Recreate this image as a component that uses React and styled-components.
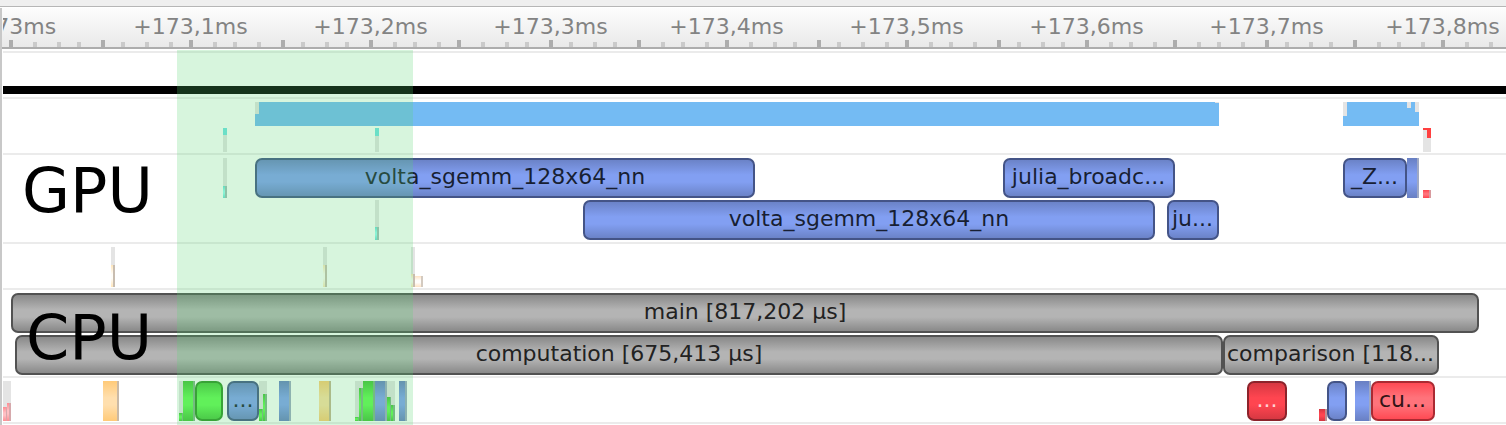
import React from "react";
import styled, { createGlobalStyle } from "styled-components";

const GlobalStyle = createGlobalStyle`
  html, body { margin: 0; background: #fff; overflow: hidden; }
`;

/* Each tone lists edge colour, centre colour, border colour and text colour. */
const tones = {
  blue: ["#687fc2", "#829ff2", "#445487", "#181f33"],
  gray: ["#838383", "#b4b4b4", "#525252", "#222222"],
  green: ["#45c13a", "#64f954", "#2f9426", "#123310"],
  red: ["#d13640", "#ff4550", "#8c232b", "#ffd0d3"],
  coral: ["#ff444e", "#ff737b", "#ab2a32", "#331416"],
  orange: ["#ffca78", "#ffdfae", "#c9b9a6", "#333333"],
  gold: ["#ffca74", "#ffdfa4", "#c5b391", "#333333"],
  cyan: ["#6addd5", "#9bfbf3", "#a0bcb8", "#333333"],
  cream: ["#ffe6bb", "#fffdf8", "#c8bdb0", "#333333"],
  peach: ["#ffe3c4", "#fffdfb", "#d3cac0", "#333333"],
  pink: ["#ff8c93", "#ffc0c4", "#d6a9ac", "#333333"],
};

const fill = (tone) =>
  `linear-gradient(to bottom, ${tones[tone][0]} 0%, ${tones[tone][1]} 42%, ${tones[tone][1]} 60%, ${tones[tone][0]} 100%)`;

const Window = styled.div`
  position: relative;
  width: 1506px;
  height: 425px;
  overflow: hidden;
  background: #fff;
  font: 22px/1 "DejaVu Sans", sans-serif;
`;

const TopStrip = styled.div`
  height: 6px;
  background: #efefef;
  border-bottom: 1px solid #b6b6b6;
`;

const Trace = styled.main`
  height: 417px;
  margin-top: 1px;
  box-sizing: border-box;
  border-left: 2px solid #c8c8c8;
  padding-left: 1px;
  overflow: hidden;
`;

const Ruler = styled.header`
  height: 39px;
  margin-left: -1px;
  padding-left: 1px;
  display: flex;
  flex-direction: column;
  justify-content: space-between;
  background: linear-gradient(#fdfdfd, #e9e9e9);
  border-bottom: 2px solid #adadad;
`;

const Labels = styled.div`
  display: flex;
  height: 32px;
  padding-left: 6.5px;
  overflow: hidden;
`;

const Label = styled.span`
  width: 0;
  margin-right: ${(p) => p.$step}px;
  display: flex;
  justify-content: center;
  white-space: nowrap;
  line-height: 38px;
  color: #838383;
`;

const Ticks = styled.div`
  display: flex;
  align-items: flex-end;
  height: 7px;
  padding-left: 6px;
  overflow: hidden;
`;

const Tick = styled.i`
  flex: none;
  width: 4px;
  height: ${(p) => (p.$major ? 7 : 5)}px;
  margin-right: ${(p) => p.$step - 4}px;
  background: ${(p) => (p.$major ? "#adadad" : "#cacaca")};
`;

const Rows = styled.div`
  padding-top: 2px;
`;

const Row = styled.section`
  height: ${(p) => p.$height}px;
  box-sizing: border-box;
  border-top: 2px solid #ebebeb;
  padding-top: 3px;
  display: flex;
  flex-direction: column;
  gap: 2px;
`;

const Playback = styled.div`
  flex: none;
  height: 8px;
  margin-top: 30px;
  background: #000;
`;

const Lane = styled.div`
  flex: none;
  display: flex;
  height: ${(p) => p.$height || 40}px;
`;

const Zone = styled.div`
  flex: none;
  box-sizing: border-box;
  width: ${(p) => p.$width}px;
  margin-left: ${(p) => p.$gap}px;
  padding-right: ${(p) => (p.$cut ? 1 : 0)}px;
  border: 2px solid ${(p) => tones[p.$tone][2]};
  border-radius: 7px;
  background: ${(p) => fill(p.$tone)};
  background-origin: border-box;
  color: ${(p) => tones[p.$tone][3]};
  display: flex;
  justify-content: center;
  white-space: nowrap;
  line-height: 33px;
`;

const Sliver = styled.div`
  flex: none;
  box-sizing: border-box;
  width: ${(p) => p.$width}px;
  margin-left: ${(p) => p.$gap}px;
  padding-top: ${(p) => p.$top}px;
  background: ${(p) => (p.$bare ? "none" : "#e4e4e4")};
  display: flex;
`;

const shades = { blue: "#9ea8c4", green: "#7eb585", coral: "#d89a9e", red: "#bd9194" };

const SliverFill = styled.div`
  flex: 1;
  background: ${(p) => fill(p.$tone)};
  border-right: ${(p) => p.$shade}px solid ${(p) => shades[p.$tone] || tones[p.$tone][2]};
`;

const Load = styled.div`
  flex: none;
  width: ${(p) => p.$width}px;
  margin-left: ${(p) => p.$gap}px;
  background: linear-gradient(
    ${(p) => p.$from} ${(p) => p.$split}px,
    ${(p) => p.$to} ${(p) => p.$split}px
  );
`;

const Selection = styled.div`
  position: absolute;
  left: 177px;
  top: 50px;
  width: 236px;
  bottom: 0;
  background: rgba(88, 212, 112, 0.24);
`;

const Caption = styled.div`
  position: absolute;
  left: ${(p) => p.$left}px;
  top: ${(p) => p.$top}px;
  font-size: 62px;
  line-height: 72px;
  color: #000;
`;

const LANE_START = 3;

/* Items are [start, end, ...rest]; the gap to the previous item is derived. */
const withGaps = (items) =>
  items.map((item, i) => ({
    gap: item[0] - (i ? items[i - 1][1] : LANE_START),
    width: item[1] - item[0],
    rest: item.slice(2),
  }));

/* Zone: [start, end, tone, text]; sliver: [start, end, tone, top, shade, bare]. */
const ZoneLane = ({ items }) => (
  <Lane>
    {withGaps(items).map(({ gap, width, rest }, i) => {
      const [tone, detail, shade, bare] = rest;
      return typeof detail === "string" ? (
        <Zone key={i} $gap={gap} $width={width} $tone={tone} $cut={/\w\.\.\.$/.test(detail)}>
          {detail}
        </Zone>
      ) : (
        <Sliver key={i} $gap={gap} $width={width} $top={detail} $bare={bare}>
          <SliverFill $tone={tone} $shade={shade} />
        </Sliver>
      );
    })}
  </Lane>
);

/* Load column: [start, end, upper colour, lower colour, split]. */
const LoadLane = ({ items }) => (
  <Lane $height={24}>
    {withGaps(items).map(({ gap, width, rest }, i) => (
      <Load key={i} $gap={gap} $width={width} $from={rest[0]} $to={rest[1]} $split={rest[2]} />
    ))}
  </Lane>
);

const IDLE = "#e4e4e4";
const BUSY = "#74bbf3";
const COPY = "#71e3e3";
const FAULT = "#ff4040";

const labels = [
  ["+173ms", 181], ["+173,1ms", 180], ["+173,2ms", 180], ["+173,3ms", 176], ["+173,4ms", 180],
  ["+173,5ms", 180], ["+173,6ms", 180], ["+173,7ms", 176], ["+173,8ms", 0],
];

const ticks = [
  11, 35, 59, 79, 103, 123, 147, 171, 191, 215, 235, 259, 283, 303, 327, 347, 371, 395, 415, 439,
  459, 483, 507, 527, 551, 571, 595, 615, 639, 663, 683, 707, 727, 751, 775, 795, 819, 839, 863, 887,
  907, 931, 951, 975, 999, 1019, 1043, 1063, 1087, 1111, 1131, 1155, 1175, 1199, 1219, 1243, 1267,
  1287, 1311, 1331, 1355, 1379, 1399, 1423, 1443, 1467, 1491,
];

export default function App() {
  return (
    <>
      <GlobalStyle />
      <Window>
        <TopStrip />
        <Trace>
          <Ruler>
            <Labels>
              {labels.map(([text, step]) => (
                <Label key={text} $step={step}>{text}</Label>
              ))}
            </Labels>
            <Ticks>
              {ticks.map((x, i) => (
                <Tick key={x} $major={i % 4 === 0} $step={(ticks[i + 1] || x + 15) - x} />
              ))}
            </Ticks>
          </Ruler>
          <Rows>
            <Row $height={46}>
              <Playback />
            </Row>
            <Row $height={56}>
              <LoadLane
                items={[
                  [255, 259, IDLE, BUSY, 12],
                  [259, 1215, BUSY, BUSY, 0],
                  [1215, 1219, IDLE, BUSY, 1],
                  [1343, 1347, IDLE, BUSY, 14],
                  [1347, 1407, BUSY, BUSY, 0],
                  [1407, 1411, IDLE, BUSY, 6],
                  [1411, 1415, BUSY, BUSY, 0],
                  [1415, 1419, IDLE, BUSY, 10],
                ]}
              />
              <LoadLane
                items={[
                  [223, 227, COPY, IDLE, 7],
                  [375, 379, COPY, IDLE, 8],
                  [1423, 1427, FAULT, IDLE, 2],
                  [1427, 1431, FAULT, IDLE, 10],
                ]}
              />
            </Row>
            <Row $height={89}>
              <ZoneLane
                items={[
                  [223, 227, "cyan", 28, 2],
                  [255, 755, "blue", "volta_sgemm_128x64_nn"],
                  [1003, 1175, "blue", "julia_broadc..."],
                  [1343, 1407, "blue", "_Z..."],
                  [1407, 1419, "blue", 0, 2],
                  [1423, 1431, "coral", 32, 2, true],
                ]}
              />
              <ZoneLane
                items={[
                  [375, 379, "cyan", 27, 2],
                  [583, 1155, "blue", "volta_sgemm_128x64_nn"],
                  [1167, 1219, "blue", "ju..."],
                ]}
              />
            </Row>
            <Row $height={46}>
              <ZoneLane
                items={[
                  [111, 115, "cream", 18, 2],
                  [323, 327, "cream", 18, 2],
                  [411, 415, "cream", 27, 2],
                  [415, 423, "peach", 29, 2, true],
                ]}
              />
            </Row>
            <Row $height={88}>
              <ZoneLane items={[[11, 1479, "gray", "main [817,202 µs]"]]} />
              <ZoneLane
                items={[
                  [15, 1223, "gray", "computation [675,413 µs]"],
                  [1223, 1439, "gray", "comparison [118..."],
                ]}
              />
            </Row>
            <Row $height={46}>
              <ZoneLane
                items={[
                  [3, 7, "pink", 26, 1],
                  [7, 11, "pink", 22, 2],
                  [103, 119, "orange", 0, 2],
                  [179, 183, "green", 32, 1],
                  [183, 195, "green", 0, 2],
                  [195, 223, "green", ""],
                  [227, 259, "blue", "..."],
                  [259, 263, "green", 28, 1],
                  [263, 267, "green", 13, 2],
                  [279, 291, "blue", 0, 2],
                  [319, 331, "gold", 0, 2],
                  [355, 359, "green", 36, 1],
                  [359, 363, "green", 7, 2],
                  [363, 375, "green", 0, 2],
                  [375, 387, "blue", 0, 2],
                  [387, 391, "green", 16, 1],
                  [391, 395, "green", 24, 2],
                  [399, 407, "blue", 0, 2],
                  [1247, 1287, "red", "..."],
                  [1319, 1327, "red", 28, 2, true],
                  [1327, 1347, "blue", ""],
                  [1355, 1371, "blue", 0, 2],
                  [1371, 1435, "coral", "cu..."],
                ]}
              />
            </Row>
            <Row $height={3} />
          </Rows>
        </Trace>
        <Selection />
        <Caption $left={22} $top={155}>GPU</Caption>
        <Caption $left={26} $top={302}>CPU</Caption>
      </Window>
    </>
  );
}
